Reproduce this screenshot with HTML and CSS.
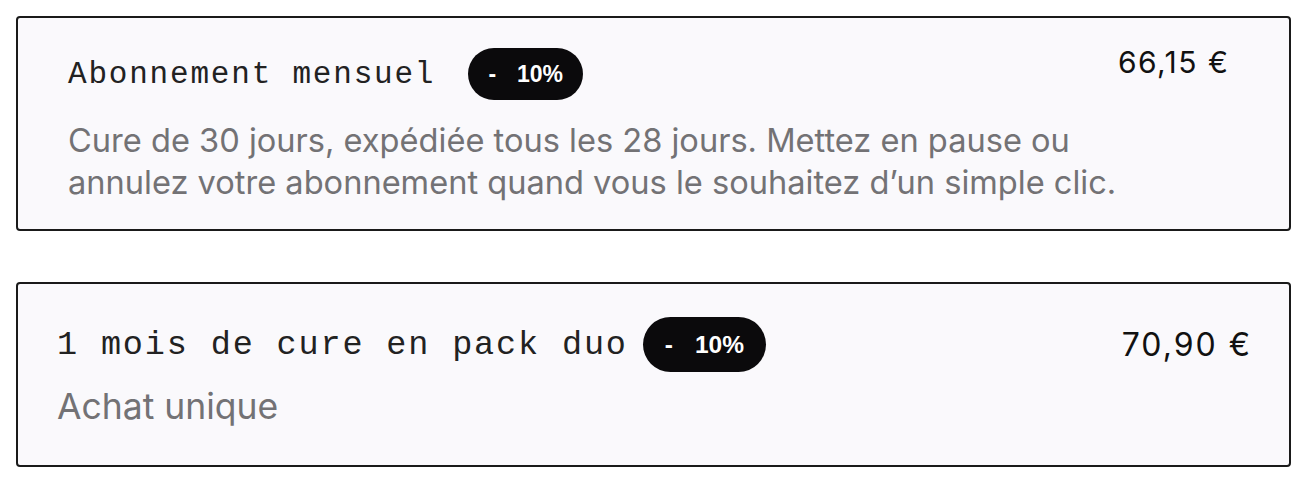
FILE: index.html
```html
<!DOCTYPE html>
<html lang="fr">
<head>
<meta charset="utf-8">
<title>Abonnement</title>
<link rel="stylesheet" href="styles.css">
</head>
<body>
<div class="list">
  <div class="card card-sub">
    <div class="main">
      <div class="title-row">
        <span class="title">Abonnement mensuel</span>
        <span class="badge"><span class="minus">-</span>10%</span>
      </div>
      <p class="desc">Cure de 30 jours, expédiée tous les 28 jours. Mettez en pause ou<br>annulez votre abonnement quand vous le souhaitez d’un simple clic.</p>
    </div>
    <div class="price">66,15 €</div>
  </div>
  <div class="card card-duo">
    <div class="main">
      <div class="title-row">
        <span class="title">1 mois de cure en pack duo</span>
        <span class="badge"><span class="minus">-</span>10%</span>
      </div>
      <p class="desc">Achat unique</p>
    </div>
    <div class="price">70,90 €</div>
  </div>
</div>
</body>
</html>
```

FILE: styles.css
```css
html, body {
  margin: 0;
  padding: 0;
  background: #ffffff;
}

body {
  padding: 16px 9px 0 16px;
  font-family: "Inter", "Liberation Sans", Arial, sans-serif;
  color: #1c1c1c;
}

.list {
  display: flex;
  flex-direction: column;
  gap: 51px;
}

.card {
  display: flex;
  justify-content: space-between;
  border: 2px solid #1a1a1a;
  border-radius: 4px;
  background: #faf9fc;
}

.main {
  display: flex;
  flex-direction: column;
}

.title-row {
  display: flex;
  align-items: center;
}

.title {
  font-family: "Liberation Mono", "DejaVu Sans Mono", monospace;
  color: #222222;
  white-space: pre;
}

.badge {
  display: inline-flex;
  align-items: center;
  justify-content: center;
  background: #0b0a0c;
  color: #ffffff;
  font-family: "Liberation Sans", Arial, sans-serif;
  font-weight: 700;
  border-radius: 999px;
  white-space: pre;
}

.minus {
  margin-right: 0.9em;
}

.desc {
  margin: 0;
  color: #737275;
  font-weight: 400;
}

.price {
  color: #111111;
  white-space: nowrap;
  font-weight: 400;
}

/* Card 1 */
.card-sub {
  padding: 30px 61px 26px 50px;
}

.card-sub .title {
  font-size: 31px;
  letter-spacing: 1.8px;
}

.card-sub .title-row {
  gap: 33px;
  height: 52px;
}

.card-sub .badge {
  width: 115px;
  height: 52px;
  font-size: 23px;
}

.card-sub .desc {
  margin-top: 19px;
  font-size: 32.6px;
  line-height: 42px;
}

.card-sub .price {
  font-size: 30px;
  letter-spacing: 1.5px;
  line-height: 36px;
  margin-top: -4px;
  margin-right: -1.5px;
}

/* Card 2 */
.card-duo {
  padding: 33px 39px 36px 39px;
  align-items: flex-start;
}

.card-duo .title {
  font-size: 33.5px;
  letter-spacing: 1.85px;
}

.card-duo .title-row {
  gap: 15px;
  height: 55px;
}

.card-duo .badge {
  width: 123px;
  height: 55px;
  font-size: 24.5px;
}

.card-duo .desc {
  margin-top: 13px;
  font-size: 35.5px;
  line-height: 44px;
}

.card-duo .price {
  font-size: 32px;
  letter-spacing: 2px;
  line-height: 55px;
  margin-right: -2px;
}
```
